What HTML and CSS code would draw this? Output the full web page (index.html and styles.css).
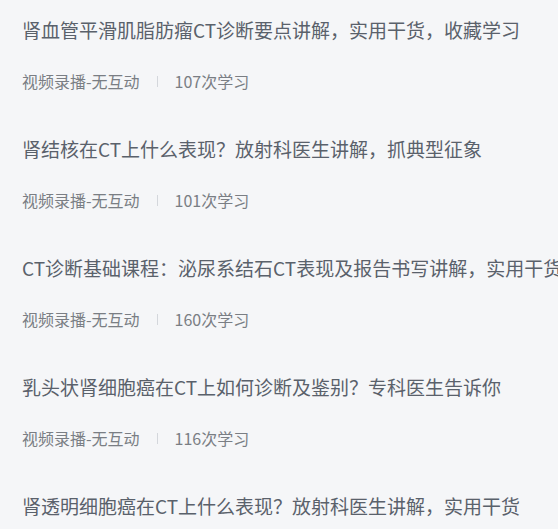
FILE: index.html
```html
<!DOCTYPE html>
<html lang="zh-CN">
<head>
<meta charset="utf-8">
<title>课程列表</title>
<link rel="stylesheet" href="styles.css">
</head>
<body>
<ul class="course-list">
  <li class="course">
    <div class="course-title">肾血管平滑肌脂肪瘤CT诊断要点讲解，实用干货，收藏学习</div>
    <div class="course-meta"><span class="meta-type">视频录播-无互动</span><span class="meta-sep"></span><span class="meta-count">107次学习</span></div>
  </li>
  <li class="course">
    <div class="course-title">肾结核在CT上什么表现？放射科医生讲解，抓典型征象</div>
    <div class="course-meta"><span class="meta-type">视频录播-无互动</span><span class="meta-sep"></span><span class="meta-count">101次学习</span></div>
  </li>
  <li class="course">
    <div class="course-title">CT诊断基础课程：泌尿系结石CT表现及报告书写讲解，实用干货，收藏学习</div>
    <div class="course-meta"><span class="meta-type">视频录播-无互动</span><span class="meta-sep"></span><span class="meta-count">160次学习</span></div>
  </li>
  <li class="course">
    <div class="course-title">乳头状肾细胞癌在CT上如何诊断及鉴别？专科医生告诉你</div>
    <div class="course-meta"><span class="meta-type">视频录播-无互动</span><span class="meta-sep"></span><span class="meta-count">116次学习</span></div>
  </li>
  <li class="course">
    <div class="course-title">肾透明细胞癌在CT上什么表现？放射科医生讲解，实用干货</div>
  </li>
</ul>
</body>
</html>
```

FILE: styles.css
```css
html, body {
  margin: 0;
  padding: 0;
  overflow: hidden;
  background: #f5f6f8;
}

body {
  font-family: "Microsoft YaHei", "Noto Sans CJK SC", "Noto Sans", sans-serif;
}

.course-list {
  list-style: none;
  margin: 0;
  padding: 16px 0 0 22px;
}

.course {
  display: flex;
  flex-direction: column;
  gap: 27px;
  padding-bottom: 44px;
}

.course-title {
  font-size: 19px;
  line-height: 28px;
  color: #5a616b;
  white-space: nowrap;
  overflow: hidden;
}

.course-meta {
  display: flex;
  align-items: center;
  font-size: 16px;
  line-height: 20px;
  color: #7a7e84;
}

.meta-sep {
  width: 1px;
  height: 11px;
  background: #d4d7dc;
  margin: 0 17px;
}
```
